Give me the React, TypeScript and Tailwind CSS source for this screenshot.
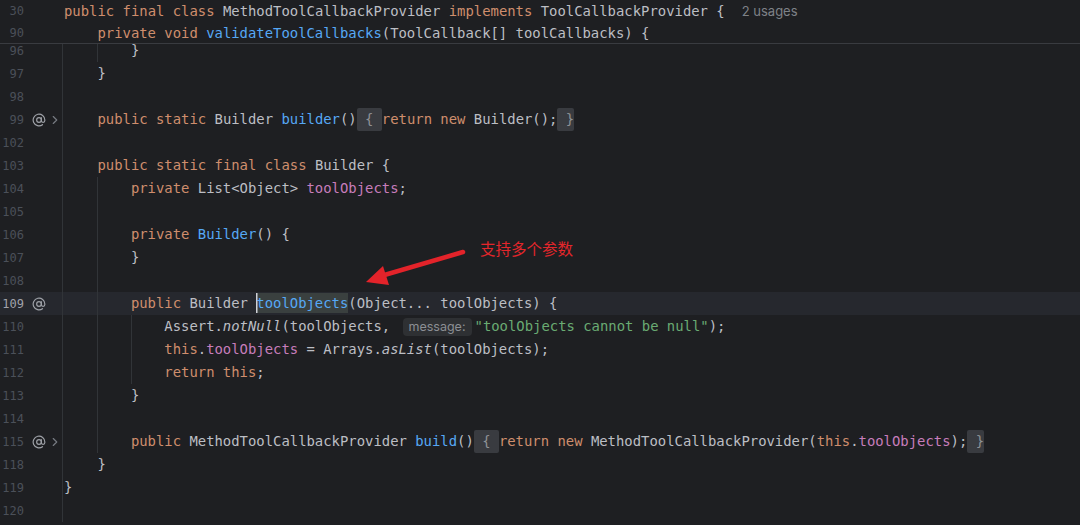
import type { ReactNode } from 'react';
import { AtSign, ChevronRight } from 'lucide-react';

const K = 'text-[#cf8e6d]';
const D = 'text-[#bcbec4]';
const M = 'text-[#56a8f5]';
const F = 'text-[#c77dbb]';
const S = 'text-[#6aab73]';

function T({ c, children }: { c: string; children: ReactNode }) {
  return <span className={c}>{children}</span>;
}

function Fold({ children }: { children: ReactNode }) {
  return (
    <span className="inline-block rounded-[2px] bg-[#393b40] leading-[23px] text-[#8f9296]">
      {children}
    </span>
  );
}

function Hint({ children }: { children: ReactNode }) {
  return (
    <span className="ml-[4px] mr-[3px] inline-block rounded-[4px] bg-[#2e3033] px-[6px] font-['Inter',sans-serif] text-[12.5px] leading-[18px] text-[#8c8f94]">
      {children}
    </span>
  );
}

interface LineProps {
  n: number;
  indent?: number;
  guides?: number[];
  gutter?: 'at' | 'fold';
  current?: boolean;
  header?: boolean;
  children?: ReactNode;
}

function Line({ n, indent = 0, guides = [], gutter, current, header, children }: LineProps) {
  const levels = children ? indent / 4 : guides.length ? Math.max(...guides) / 4 + 1 : 0;
  return (
    <div className={`flex ${header ? 'h-[22px]' : 'h-[23px]'} ${current ? 'bg-[#26282e]' : ''}`}>
      <div className="flex w-[62px] shrink-0 items-center font-['DejaVu_Sans_Mono',monospace] text-[12px]">
        <span className={`w-[24px] text-right ${current ? 'text-[#a1a3ab]' : 'text-[#4b5059]'}`}>{n}</span>
        {gutter && <AtSign size={14} strokeWidth={2} className="ml-[8px] text-[#9fa2a8]" />}
        {gutter === 'fold' && <ChevronRight size={14} strokeWidth={2} className="ml-[2px] text-[#767a81]" />}
      </div>
      <div className={`w-px shrink-0 ${header ? '' : 'bg-[#313438]'}`} />
      <div
        className={`pl-[1px] whitespace-pre font-['DejaVu_Sans_Mono',monospace] text-[13.9px] ${
          header ? 'leading-[22px]' : 'leading-[23px]'
        } text-[#bcbec4]`}
      >
        {Array.from({ length: levels }).map((_, i) => (
          <span
            key={i}
            className={`inline-block h-[23px] w-[4ch] align-top ${
              guides.includes(i * 4) ? 'border-l border-[#313438]' : ''
            }`}
          />
        ))}
        {children}
      </div>
    </div>
  );
}

export default function App() {
  return (
    <div className="relative h-[525px] w-[1080px] overflow-hidden bg-[#1e1f22]">
      {/* sticky header lines */}
      <div className="h-[44px] overflow-hidden border-b border-[#393b40]">
        <Line n={30} header>
          <T c={K}>public final class </T>
          <T c={D}>MethodToolCallbackProvider </T>
          <T c={K}>implements </T>
          <T c={D}>ToolCallbackProvider {'{'}</T>
          <span className="ml-[17px] font-['Inter',sans-serif] text-[13px] text-[#7e8288]">2 usages</span>
        </Line>
        <Line n={90} indent={4} header>
          <T c={K}>private void </T>
          <T c={M}>validateToolCallbacks</T>
          <T c={D}>(ToolCallback[] toolCallbacks) {'{'}</T>
        </Line>
      </div>

      <div className="h-[481px] overflow-hidden">
        <div className="-mt-[5px]">
          <Line n={96} indent={8} guides={[4]}>
            <T c={D}>{'}'}</T>
          </Line>
          <Line n={97} indent={4}>
            <T c={D}>{'}'}</T>
          </Line>
          <Line n={98} />
          <Line n={99} indent={4} gutter="fold">
            <T c={K}>public static </T>
            <T c={D}>Builder </T>
            <T c={M}>builder</T>
            <T c={D}>()</T>
            <Fold>{' { '}</Fold>
            <T c={K}>return new </T>
            <T c={D}>Builder();</T>
            <Fold>{' }'}</Fold>
          </Line>
          <Line n={102} />
          <Line n={103} indent={4}>
            <T c={K}>public static final class </T>
            <T c={D}>Builder {'{'}</T>
          </Line>
          <Line n={104} indent={8} guides={[4]}>
            <T c={K}>private </T>
            <T c={D}>{'List<Object> '}</T>
            <T c={F}>toolObjects</T>
            <T c={D}>;</T>
          </Line>
          <Line n={105} guides={[4]} />
          <Line n={106} indent={8} guides={[4]}>
            <T c={K}>private </T>
            <T c={M}>Builder</T>
            <T c={D}>() {'{'}</T>
          </Line>
          <Line n={107} indent={8} guides={[4]}>
            <T c={D}>{'}'}</T>
          </Line>
          <Line n={108} guides={[4]} />
          <Line n={109} indent={8} guides={[4]} gutter="at" current>
            <T c={K}>public </T>
            <T c={D}>Builder </T>
            <span className="inline-block bg-[#3a403f] leading-[20px] text-[#56a8f5] shadow-[inset_1.5px_0_0_#ced0d6]">
              toolObjects
            </span>
            <T c={D}>(Object... toolObjects) {'{'}</T>
          </Line>
          <Line n={110} indent={12} guides={[4, 8]}>
            <T c={D}>Assert.</T>
            <span className="italic">notNull</span>
            <T c={D}>(toolObjects, </T>
            <Hint>message:</Hint>
            <T c={S}>"toolObjects cannot be null"</T>
            <T c={D}>);</T>
          </Line>
          <Line n={111} indent={12} guides={[4, 8]}>
            <T c={K}>this</T>
            <T c={D}>.</T>
            <T c={F}>toolObjects</T>
            <T c={D}> = Arrays.</T>
            <span className="italic">asList</span>
            <T c={D}>(toolObjects);</T>
          </Line>
          <Line n={112} indent={12} guides={[4, 8]}>
            <T c={K}>return this</T>
            <T c={D}>;</T>
          </Line>
          <Line n={113} indent={8} guides={[4]}>
            <T c={D}>{'}'}</T>
          </Line>
          <Line n={114} guides={[4]} />
          <Line n={115} indent={8} guides={[4]} gutter="fold">
            <T c={K}>public </T>
            <T c={D}>MethodToolCallbackProvider </T>
            <T c={M}>build</T>
            <T c={D}>()</T>
            <Fold>{' { '}</Fold>
            <T c={K}>return new </T>
            <T c={D}>MethodToolCallbackProvider(</T>
            <T c={K}>this</T>
            <T c={D}>.</T>
            <T c={F}>toolObjects</T>
            <T c={D}>);</T>
            <Fold>{' }'}</Fold>
          </Line>
          <Line n={118} indent={4}>
            <T c={D}>{'}'}</T>
          </Line>
          <Line n={119}>
            <T c={D}>{'}'}</T>
          </Line>
          <Line n={120} />
        </div>
      </div>

      {/* red annotation */}
      <svg className="pointer-events-none absolute left-0 top-0" width="1080" height="525" viewBox="0 0 1080 525">
        <line x1="463" y1="252" x2="381" y2="276" stroke="#e3232a" strokeWidth="4.5" strokeLinecap="round" />
        <polygon points="366,282 383,266 389,285" fill="#e3232a" />
      </svg>
      <span className="absolute left-[480px] top-[238px] font-['Noto_Sans_CJK_SC',sans-serif] text-[15.5px] leading-[20px] text-[#e3262b]">
        支持多个参数
      </span>
    </div>
  );
}
